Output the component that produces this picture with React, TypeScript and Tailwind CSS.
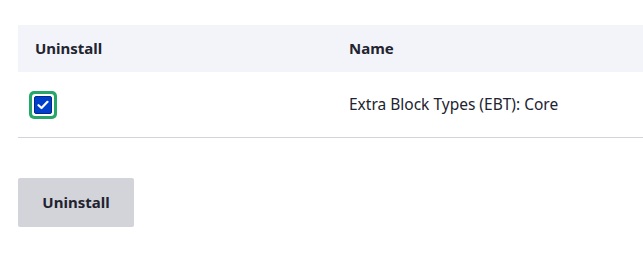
export default function App() {
  return (
    <div
      className="w-[643px] h-[260px] bg-white overflow-hidden text-[#222330]"
      style={{ fontFamily: '"Noto Sans", "Open Sans", sans-serif' }}
    >
      <div className="pl-[18px] pt-[25px]">
        <table className="w-[625px] border-collapse">
          <thead>
            <tr className="bg-[#f3f4f9] h-[47px]">
              <th className="w-[314px] pl-[17px] text-left text-[15px] font-bold">Uninstall</th>
              <th className="pl-[17px] text-left text-[15px] font-bold">Name</th>
            </tr>
          </thead>
          <tbody>
            <tr className="h-[65px] border-b border-[#d3d4d9]">
              <td className="pl-[11px] pt-[2px]">
                <div className="w-[28px] h-[28px] rounded-[5px] bg-[#26a769] flex items-center justify-center">
                  <div className="w-[22px] h-[22px] rounded-[3px] bg-white flex items-center justify-center">
                    <div className="w-[18px] h-[18px] rounded-[2px] bg-[#003ecc] border border-[#002a8a] flex items-center justify-center">
                      <svg width="12" height="10" viewBox="0 0 12 10" fill="none">
                        <path d="M1.5 5.2 L4.5 8 L10.5 1.8" stroke="white" strokeWidth="2.2" strokeLinecap="round" strokeLinejoin="round" />
                      </svg>
                    </div>
                  </div>
                </div>
              </td>
              <td className="pl-[17px] text-[15.5px]">Extra Block Types (EBT): Core</td>
            </tr>
          </tbody>
        </table>
        <button className="mt-[40px] w-[116px] h-[49px] rounded-[2px] bg-[#d3d4d9] text-[15px] font-bold text-[#222330]">
          Uninstall
        </button>
      </div>
    </div>
  );
}
